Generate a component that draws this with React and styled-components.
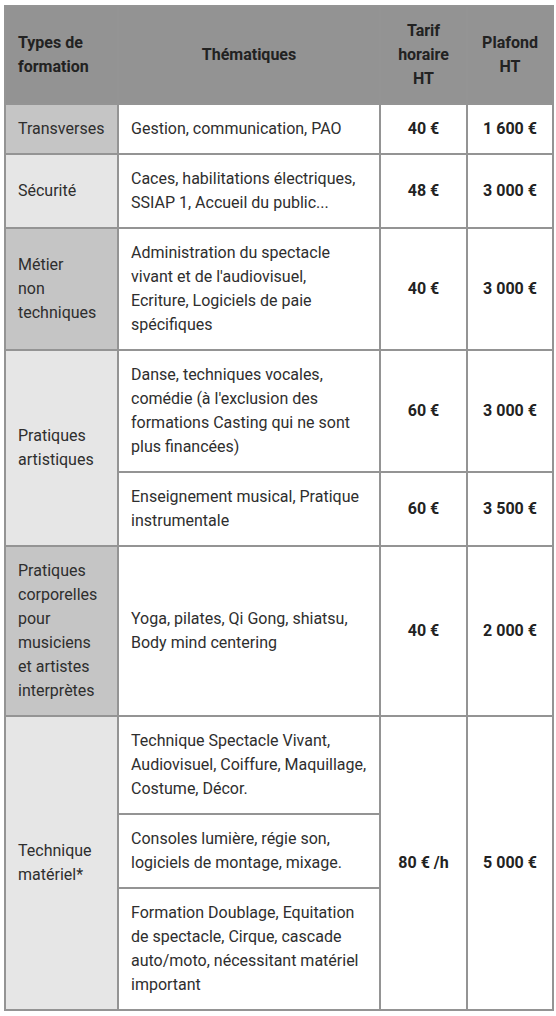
import React from 'react';
import styled, { createGlobalStyle } from 'styled-components';

const GlobalStyle = createGlobalStyle`
  html, body {
    margin: 0;
    padding: 0;
    background: #fff;
  }
  body {
    font-family: Roboto, "Liberation Sans", Arial, sans-serif;
  }
`;

const Page = styled.div`
  padding: 5px 2px 5px 4px;
`;

const Table = styled.table`
  width: 550px;
  table-layout: fixed;
  border-collapse: separate;
  border-spacing: 0;
  border-top: 2px solid #949494;
  border-left: 2px solid #949494;
  font-size: 16px;
  line-height: 24px;
  color: #2e2e2e;
`;

const HeadCell = styled.th`
  box-sizing: border-box;
  width: ${p => p.$w}px;
  padding: 12px;
  background: #939393;
  border-right: 2px solid #949494;
  border-bottom: 2px solid #949494;
  color: #222;
  font-weight: 700;
  text-align: ${p => p.$align || 'center'};
  vertical-align: middle;
`;

const TypeCell = styled.td`
  padding: 12px;
  background: ${p => (p.$tone === 'dark' ? '#c5c5c5' : '#e6e6e6')};
  border-right: 2px solid #949494;
  border-bottom: 2px solid #949494;
  text-align: left;
  vertical-align: middle;
  white-space: nowrap;
`;

const ThemeCell = styled.td`
  padding: 12px;
  background: #fff;
  border-right: 2px solid #949494;
  border-bottom: 2px solid #949494;
  text-align: left;
  vertical-align: middle;
  white-space: nowrap;
`;

const PriceCell = styled.td`
  padding: 12px 4px;
  background: #fff;
  border-right: 2px solid #949494;
  border-bottom: 2px solid #949494;
  color: #222;
  font-weight: 700;
  text-align: center;
  vertical-align: middle;
  white-space: nowrap;
`;

const groups = [
  {
    type: ['Transverses'],
    tone: 'dark',
    items: [{ theme: ['Gestion, communication, PAO'], rate: '40 €', cap: '1 600 €' }],
  },
  {
    type: ['Sécurité'],
    tone: 'light',
    items: [
      {
        theme: ['Caces, habilitations électriques,', 'SSIAP 1, Accueil du public...'],
        rate: '48 €',
        cap: '3 000 €',
      },
    ],
  },
  {
    type: ['Métier', 'non', 'techniques'],
    tone: 'dark',
    items: [
      {
        theme: [
          'Administration du spectacle',
          "vivant et de l'audiovisuel,",
          'Ecriture, Logiciels de paie',
          'spécifiques',
        ],
        rate: '40 €',
        cap: '3 000 €',
      },
    ],
  },
  {
    type: ['Pratiques', 'artistiques'],
    tone: 'light',
    items: [
      {
        theme: [
          'Danse, techniques vocales,',
          "comédie (à l'exclusion des",
          'formations Casting qui ne sont',
          'plus financées)',
        ],
        rate: '60 €',
        cap: '3 000 €',
      },
      {
        theme: ['Enseignement musical, Pratique', 'instrumentale'],
        rate: '60 €',
        cap: '3 500 €',
      },
    ],
  },
  {
    type: ['Pratiques', 'corporelles', 'pour', 'musiciens', 'et artistes', 'interprètes'],
    tone: 'dark',
    items: [
      {
        theme: ['Yoga, pilates, Qi Gong, shiatsu,', 'Body mind centering'],
        rate: '40 €',
        cap: '2 000 €',
      },
    ],
  },
  {
    type: ['Technique', 'matériel*'],
    tone: 'light',
    shared: { rate: '80 € /h', cap: '5 000 €' },
    items: [
      {
        theme: [
          'Technique Spectacle Vivant,',
          'Audiovisuel, Coiffure, Maquillage,',
          'Costume, Décor.',
        ],
      },
      { theme: ['Consoles lumière, régie son,', 'logiciels de montage, mixage.'] },
      {
        theme: [
          'Formation Doublage, Equitation',
          'de spectacle, Cirque, cascade',
          'auto/moto, nécessitant matériel',
          'important',
        ],
      },
    ],
  },
];

const Lines = ({ lines }) =>
  lines.map((line, i) => (
    <React.Fragment key={i}>
      {i > 0 && <br />}
      {line}
    </React.Fragment>
  ));

const App = () => {
  return (
    <Page>
      <GlobalStyle />
      <Table>
        <thead>
          <tr>
            <HeadCell $w={113} $align="left">
              <Lines lines={['Types de', 'formation']} />
            </HeadCell>
            <HeadCell $w={262}>Thématiques</HeadCell>
            <HeadCell $w={87}>
              <Lines lines={['Tarif', 'horaire', 'HT']} />
            </HeadCell>
            <HeadCell $w={86}>
              <Lines lines={['Plafond', 'HT']} />
            </HeadCell>
          </tr>
        </thead>
        <tbody>
          {groups.map((group, g) =>
            group.items.map((item, i) => (
              <tr key={`${g}-${i}`}>
                {i === 0 && (
                  <TypeCell rowSpan={group.items.length} $tone={group.tone}>
                    <Lines lines={group.type} />
                  </TypeCell>
                )}
                <ThemeCell>
                  <Lines lines={item.theme} />
                </ThemeCell>
                {group.shared ? (
                  i === 0 && (
                    <>
                      <PriceCell rowSpan={group.items.length}>{group.shared.rate}</PriceCell>
                      <PriceCell rowSpan={group.items.length}>{group.shared.cap}</PriceCell>
                    </>
                  )
                ) : (
                  <>
                    <PriceCell>{item.rate}</PriceCell>
                    <PriceCell>{item.cap}</PriceCell>
                  </>
                )}
              </tr>
            ))
          )}
        </tbody>
      </Table>
    </Page>
  );
};

export default App;
